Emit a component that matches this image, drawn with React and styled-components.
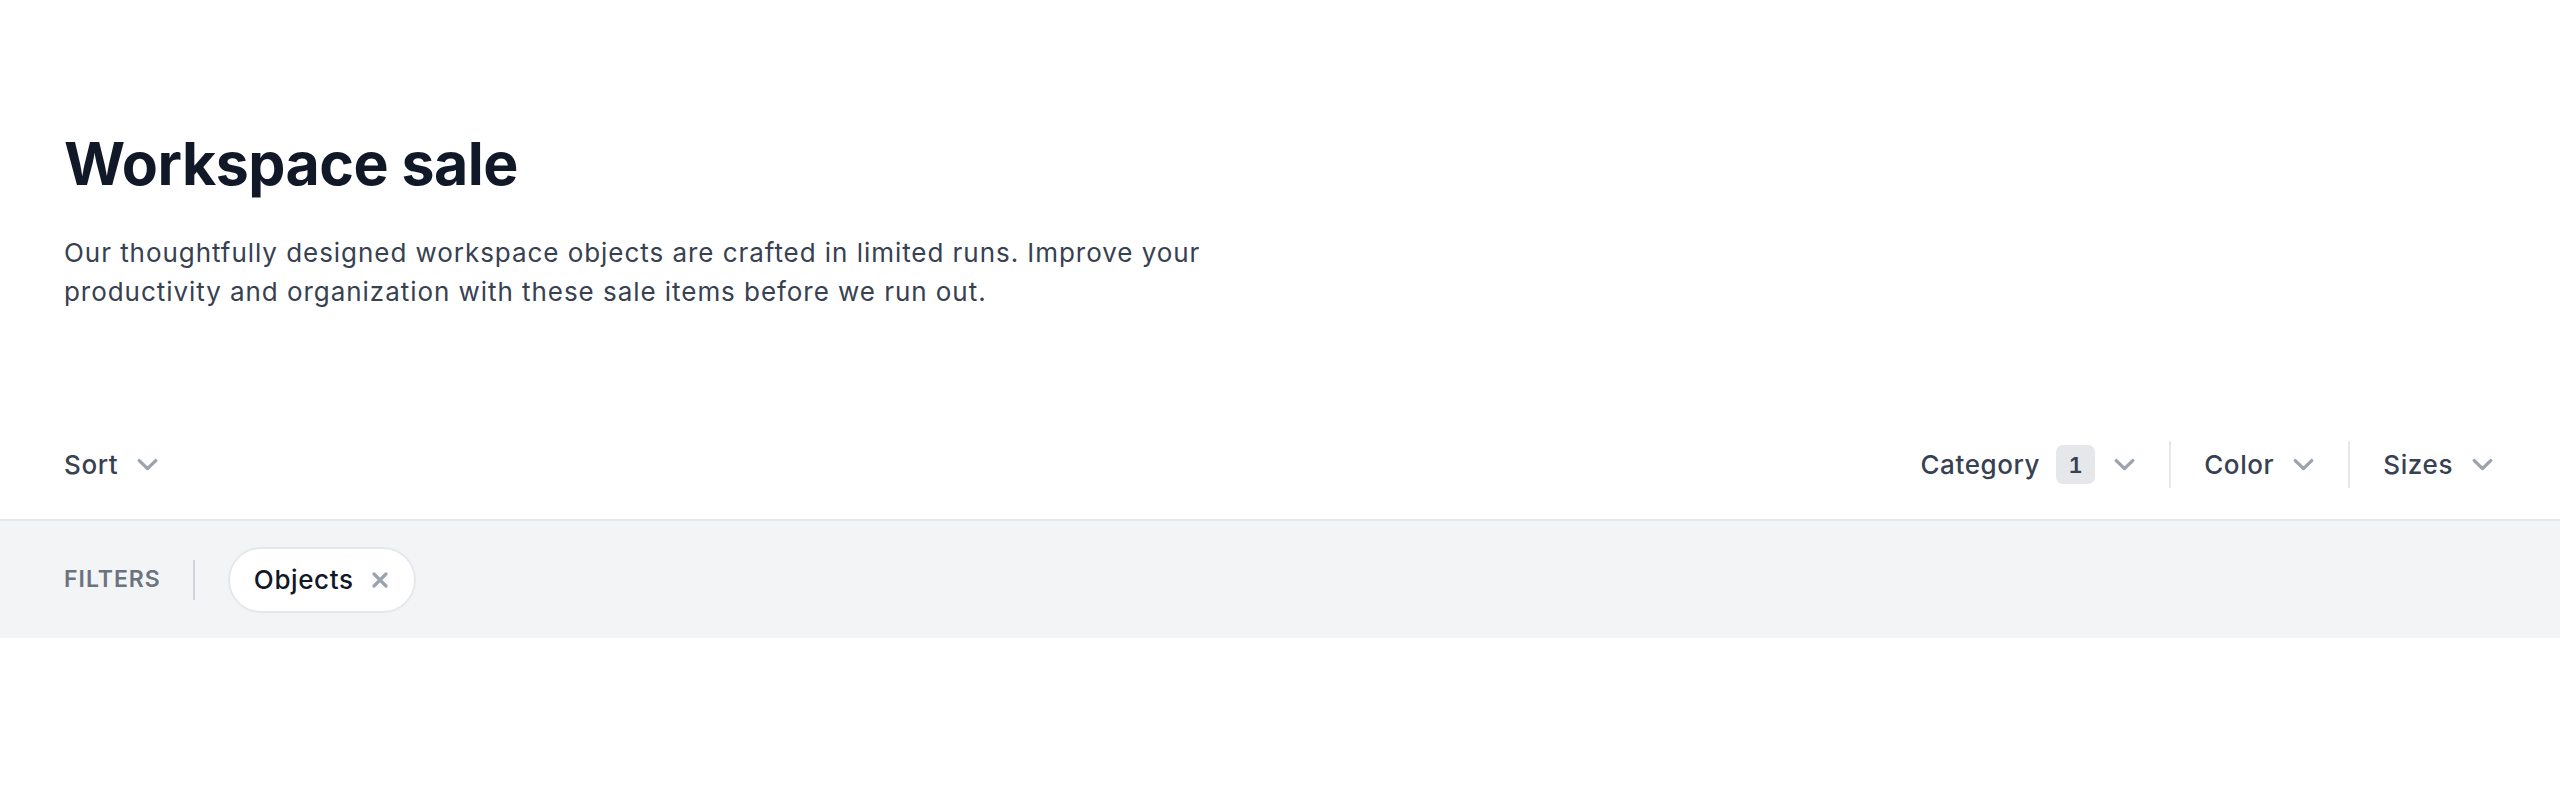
import React from 'react';
import styled, { createGlobalStyle } from 'styled-components';

const GlobalStyle = createGlobalStyle`
  html, body { margin: 0; padding: 0; background: #ffffff; }
  body {
    font-family: Inter, "Noto Sans", "Liberation Sans", sans-serif;
    -webkit-font-smoothing: antialiased;
  }
  *, *::before, *::after { box-sizing: border-box; }
`;

const Page = styled.main`
  background: #ffffff;
`;

const Header = styled.header`
  padding: 131px 64px 0;
`;

const Title = styled.h1`
  margin: 0;
  font-size: 59px;
  line-height: 65px;
  font-weight: 700;
  letter-spacing: -0.5px;
  color: #111827;
`;

const Lead = styled.p`
  margin: 37px 0 0;
  max-width: 1254px;
  font-size: 26px;
  line-height: 39px;
  letter-spacing: 0.95px;
  color: #374151;
`;

const Toolbar = styled.section`
  margin-top: 130px;
  display: flex;
  justify-content: space-between;
  align-items: stretch;
  padding: 0 67px 31px 64px;
  border-bottom: 2px solid #e5e7eb;
`;

const MenuGroup = styled.div`
  display: flex;
  align-items: stretch;
  height: 47px;
`;

const MenuButton = styled.button`
  display: flex;
  align-items: center;
  background: none;
  border: 0;
  border-left: ${(p) => (p.$first ? 'none' : '2px solid #e5e7eb')};
  padding: 0 ${(p) => (p.$last ? 0 : 34)}px 0 ${(p) => (p.$first ? 0 : 33)}px;
  font-family: inherit;
  font-size: 26px;
  line-height: 39px;
  font-weight: 500;
  letter-spacing: 0.6px;
  color: #374151;
  cursor: pointer;
`;

const CountBadge = styled.span`
  display: inline-flex;
  align-items: center;
  justify-content: center;
  margin-left: 16px;
  width: 39px;
  height: 39px;
  border-radius: 7px;
  background: #e5e7eb;
  font-size: 22px;
  line-height: 1;
  font-weight: 600;
  letter-spacing: 0;
  font-variant-numeric: tabular-nums;
  color: #374151;
`;

const ChevronSvg = styled.svg`
  display: block;
  margin-left: 19px;
  width: 21px;
  height: 13px;
  color: #9ca3af;
  flex-shrink: 0;
`;

const Chevron = () => (
  <ChevronSvg viewBox="0 0 21 13" fill="none" stroke="currentColor" aria-hidden="true">
    <path d="M2.3 2.6 L10.5 10.6 L18.7 2.6" strokeWidth="3.3" strokeLinecap="round" strokeLinejoin="round" />
  </ChevronSvg>
);

const ActiveBar = styled.div`
  display: flex;
  align-items: center;
  height: 117px;
  padding: 0 64px;
  background: #f3f4f6;
`;

const FiltersLabel = styled.h3`
  margin: 0;
  font-size: 23px;
  line-height: 33px;
  font-weight: 600;
  letter-spacing: 1px;
  text-transform: uppercase;
  color: #6b7280;
`;

const Divider = styled.span`
  display: block;
  width: 2px;
  height: 40px;
  margin: 0 33px 0 32px;
  background: #d1d5db;
`;

const Pill = styled.span`
  display: inline-flex;
  align-items: center;
  height: 66px;
  padding: 0 24px 0 24px;
  border: 2px solid #e5e7eb;
  border-radius: 999px;
  background: #ffffff;
  font-size: 26px;
  line-height: 39px;
  font-weight: 500;
  letter-spacing: 0.6px;
  color: #111827;
`;

const RemoveButton = styled.button`
  display: inline-flex;
  align-items: center;
  justify-content: center;
  margin-left: 16px;
  padding: 0;
  width: 20px;
  height: 20px;
  border: 0;
  background: none;
  color: #9ca3af;
  cursor: pointer;
`;

const XIcon = () => (
  <svg width="16" height="16" viewBox="0 0 8 8" stroke="currentColor" fill="none" aria-hidden="true">
    <path strokeLinecap="round" strokeWidth="1.6" d="M1 1l6 6m0-6L1 7" />
  </svg>
);

export default function App() {
  return (
    <Page>
      <GlobalStyle />
      <Header>
        <Title>Workspace sale</Title>
        <Lead>
          Our thoughtfully designed workspace objects are crafted in limited runs. Improve your
          productivity and organization with these sale items before we run out.
        </Lead>
      </Header>

      <Toolbar aria-labelledby="filter-heading">
        <MenuGroup>
          <MenuButton $first $last>
            Sort
            <Chevron />
          </MenuButton>
        </MenuGroup>
        <MenuGroup>
          <MenuButton $first>
            Category
            <CountBadge>1</CountBadge>
            <Chevron />
          </MenuButton>
          <MenuButton>
            Color
            <Chevron />
          </MenuButton>
          <MenuButton $last>
            Sizes
            <Chevron />
          </MenuButton>
        </MenuGroup>
      </Toolbar>

      <ActiveBar>
        <FiltersLabel>Filters</FiltersLabel>
        <Divider />
        <Pill>
          Objects
          <RemoveButton aria-label="Remove filter for Objects">
            <XIcon />
          </RemoveButton>
        </Pill>
      </ActiveBar>
    </Page>
  );
}
